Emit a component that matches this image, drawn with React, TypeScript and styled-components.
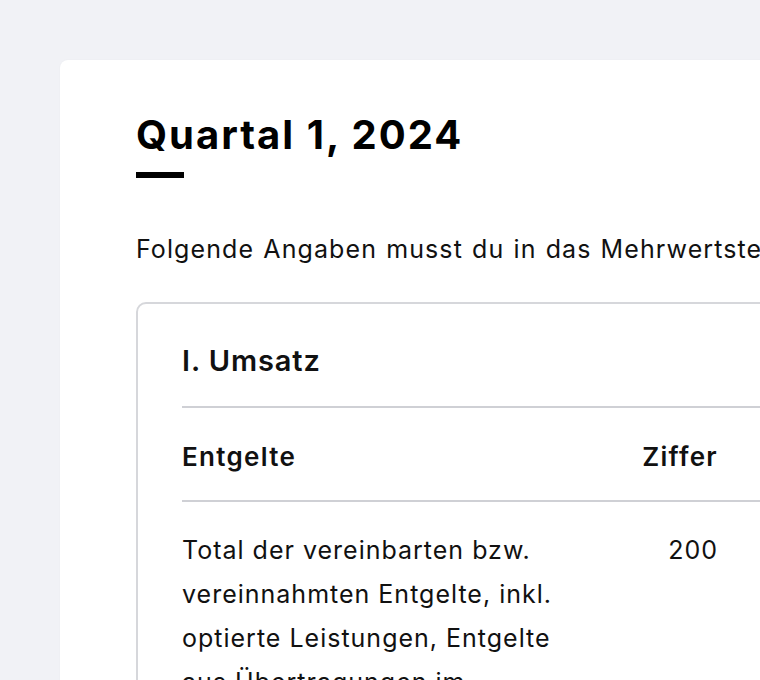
import styled, { createGlobalStyle } from "styled-components";

const GlobalStyle = createGlobalStyle`
  html, body {
    margin: 0;
    padding: 0;
    background: #f1f2f6;
    overflow: hidden;
  }
  body {
    font-family: Inter, "Noto Sans", "Liberation Sans", sans-serif;
    color: #111;
  }
`;

const rows = [
  {
    label:
      "Total der vereinbarten bzw. vereinnahmten Entgelte, inkl. optierte Leistungen, Entgelte aus Übertragungen im Meldeverfahren",
    code: "200",
  },
];

function App() {
  return (
    <>
      <GlobalStyle />
      <Page>
        <Card>
          <Title>Quartal 1, 2024</Title>
          <TitleBar />
          <Intro>
            Folgende Angaben musst du in das Mehrwertsteuerformular übertragen:
          </Intro>
          <Section>
            <SectionTitle>I. Umsatz</SectionTitle>
            <Table>
              <HeadRow>
                <HeadCell>Entgelte</HeadCell>
                <HeadCell $align="right">Ziffer</HeadCell>
                <HeadCell $align="right">Betrag</HeadCell>
              </HeadRow>
              {rows.map((r) => (
                <BodyRow key={r.code}>
                  <Cell>{r.label}</Cell>
                  <Cell $align="right">{r.code}</Cell>
                  <Cell $align="right">CHF 0.00</Cell>
                </BodyRow>
              ))}
            </Table>
          </Section>
        </Card>
      </Page>
    </>
  );
}

export default App;

const Page = styled.div`
  height: 100vh;
  padding: 60px 0 0 60px;
  box-sizing: border-box;
`;

const Card = styled.div`
  width: 1000px;
  min-height: 900px;
  background: #fff;
  border-radius: 8px;
  padding: 52px 0 0 76px;
  box-sizing: border-box;
  box-shadow: 0 0 2px rgba(20, 20, 40, 0.04);
`;

const Title = styled.h1`
  margin: 0;
  font-size: 40px;
  line-height: 46px;
  font-weight: 700;
  color: #000;
  letter-spacing: 2px;
`;

const TitleBar = styled.div`
  width: 48px;
  height: 6px;
  margin-top: 14px;
  background: #000;
`;

const Intro = styled.p`
  margin: 53px 0 0;
  font-size: 25px;
  line-height: 36px;
  letter-spacing: 1.1px;
  word-spacing: 1px;
  white-space: nowrap;
`;

const Section = styled.div`
  margin-top: 35px;
  border: 2px solid #d6d7db;
  border-radius: 10px;
  padding: 39px 0 0 44px;
  width: 840px;
  min-height: 500px;
`;

const SectionTitle = styled.h2`
  margin: 0;
  font-size: 29px;
  line-height: 36px;
  font-weight: 600;
  letter-spacing: 0.9px;
`;

const Table = styled.div`
  margin-top: 27px;
  border-top: 2px solid #cfd0d5;
`;

const HeadRow = styled.div`
  display: grid;
  grid-template-columns: 410px 126px 200px;
  padding: 31px 0 25px;
  border-bottom: 2px solid #cfd0d5;
`;

const BodyRow = styled.div`
  display: grid;
  grid-template-columns: 410px 126px 200px;
  padding: 26px 0;
`;

const HeadCell = styled.div<{ $align?: string }>`
  font-size: 26px;
  line-height: 36px;
  font-weight: 600;
  letter-spacing: 1.3px;
  text-align: ${(p) => p.$align || "left"};
`;

const Cell = styled.div<{ $align?: string }>`
  font-size: 25px;
  line-height: 44px;
  letter-spacing: 1px;
  text-align: ${(p) => p.$align || "left"};
`;
